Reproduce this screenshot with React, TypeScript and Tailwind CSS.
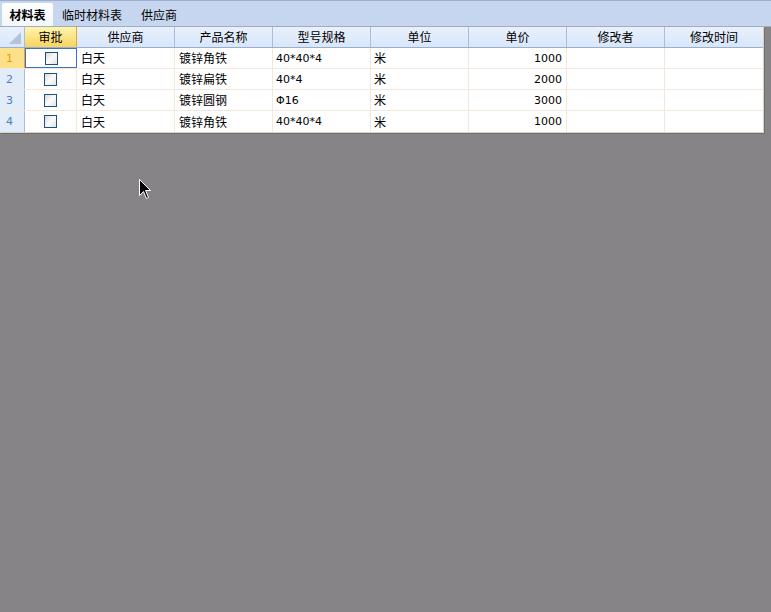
import React from 'react';

const rows = [
  { supplier: '白天', name: '镀锌角铁', spec: '40*40*4', unit: '米', price: '1000' },
  { supplier: '白天', name: '镀锌扁铁', spec: '40*4', unit: '米', price: '2000' },
  { supplier: '白天', name: '镀锌圆钢', spec: 'Φ16', unit: '米', price: '3000' },
  { supplier: '白天', name: '镀锌角铁', spec: '40*40*4', unit: '米', price: '1000' },
];

const headers = ['供应商', '产品名称', '型号规格', '单位', '单价', '修改者', '修改时间'];

function Checkbox() {
  return (
    <div className="h-[13px] w-[13px] border border-[#1d5181] bg-gradient-to-br from-[#d9d9d9] via-[#fbfbfb] to-[#e2e2e2]" />
  );
}

function App() {
  return (
    <div
      className="relative h-[612px] w-[771px] overflow-hidden bg-[#868486] text-[12px] text-black"
      style={{ fontFamily: '"Noto Sans CJK SC", "Liberation Sans", sans-serif' }}
    >
      {/* tab strip */}
      <div className="flex h-[27px] items-end border-t border-[#9cafd3] border-b border-b-[#a4acb8] bg-[#c6d6ee] pl-[2px]">
        <div className="flex h-[23px] w-[51px] items-center justify-center rounded-t-[2px] bg-gradient-to-b from-white to-[#f3f6fb] font-bold leading-none">
          材料表
        </div>
        <div className="flex h-[23px] items-center px-[9px] leading-none">临时材料表</div>
        <div className="flex h-[23px] items-center px-[10px] leading-none">供应商</div>
      </div>

      {/* grid */}
      <div className="w-[764px] border-r border-b border-[#d8d2c4] bg-white shadow-[1px_1px_0_#706e70]">
        <div className="flex h-[21px] border-b border-[#98b0d0]">
          <div className="relative w-[25px] shrink-0 border-r border-[#a9bedb] bg-gradient-to-b from-[#e8f0fc] to-[#d9e6f9]">
            <svg className="absolute bottom-[3px] right-[3px]" width="12" height="12" viewBox="0 0 12 12">
              <polygon points="12,0 12,12 0,12" fill="#b3c3da" />
            </svg>
          </div>
          <div className="flex w-[52px] shrink-0 items-center justify-center border-r border-[#d9aa3c] bg-gradient-to-b from-[#fff4ae] to-[#f9d35c] leading-none">
            审批
          </div>
          {headers.map((h) => (
            <div
              key={h}
              className="flex w-[98px] shrink-0 items-center justify-center border-r border-[#a9bedb] bg-gradient-to-b from-[#e8f0fc] to-[#d9e6f9] leading-none last:border-r-0"
            >
              {h}
            </div>
          ))}
        </div>

        {rows.map((r, i) => {
          const selected = i === 0;
          return (
            <div key={i} className="flex h-[21px] border-b border-[#f2e8db] last:border-b-0">
              <div
                className={
                  selected
                    ? 'flex w-[25px] shrink-0 items-center border-r border-[#dda63a] bg-[#fde08a] pl-[6px] text-[11px] leading-none text-[#eb9b00]'
                    : 'flex w-[25px] shrink-0 items-center border-r border-[#a9bedb] bg-[#e3ecf9] pl-[6px] text-[11px] leading-none text-[#4f80b8]'
                }
                style={{ fontFamily: '"DejaVu Sans", sans-serif' }}
              >
                {i + 1}
              </div>
              <div
                className={
                  selected
                    ? 'flex w-[52px] shrink-0 items-center justify-center border border-[#3b74c6]'
                    : 'flex w-[52px] shrink-0 items-center justify-center border-r border-[#f2e8db]'
                }
              >
                <Checkbox />
              </div>
              <div className="flex w-[98px] shrink-0 items-center border-r border-[#f2e8db] pl-[4px] leading-none">{r.supplier}</div>
              <div className="flex w-[98px] shrink-0 items-center border-r border-[#f2e8db] pl-[4px] leading-none">{r.name}</div>
              <div
                className="flex w-[98px] shrink-0 items-center border-r border-[#f2e8db] pl-[3px] text-[11px] leading-none"
                style={{ fontFamily: '"DejaVu Sans", "Noto Sans CJK SC", sans-serif' }}
              >
                {r.spec}
              </div>
              <div className="flex w-[98px] shrink-0 items-center border-r border-[#f2e8db] pl-[3px] leading-none">{r.unit}</div>
              <div
                className="flex w-[98px] shrink-0 items-center justify-end border-r border-[#f2e8db] pr-[4px] text-[11px] leading-none"
                style={{ fontFamily: '"DejaVu Sans", sans-serif' }}
              >
                {r.price}
              </div>
              <div className="w-[98px] shrink-0 border-r border-[#f2e8db]" />
              <div className="w-[98px] shrink-0" />
            </div>
          );
        })}
      </div>

      {/* mouse pointer */}
      <svg className="absolute left-[139px] top-[179px]" width="13" height="21" viewBox="0 0 13 21">
        <path d="M0.5 0.5 L0.5 16.5 L4.5 12.5 L7.5 19.5 L9.5 18.5 L6.5 11.5 L11.5 11.5 Z" fill="#000" stroke="#fff" strokeWidth="1" />
      </svg>
    </div>
  );
}

export default App;
